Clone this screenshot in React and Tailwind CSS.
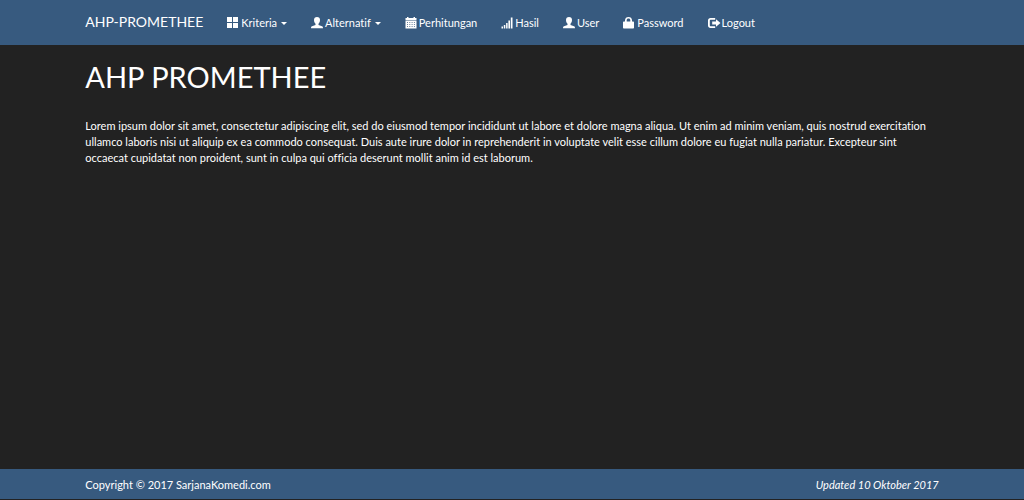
const ICONS = {
  kriteria: <path d="M0 0h5v5H0zM6 0h5v5H6zM0 6h5v5H0zM6 6h5v5H6z" />,
  orang: (
    <path d="M6 0C4 0 3 1.200 3 3c0 1.700.7 3 1.500 3.800v1.100L1 9.200C.2 9.600 0 10 0 11.300h12c0-1.300-.2-1.700-1-2.100L7.500 7.900V6.800C8.300 6 9 4.700 9 3 9 1.200 8 0 6 0z" />
  ),
  kalender: (
    <path
      fillRule="evenodd"
      d="M2 0h1.500v1h5V0H10v1h1.500v2H.5V1H2zM.5 3.500h11v8H.5zM2 5v.8h1V5zm2.300 0v.8h1V5zm2.300 0v.8h1V5zm2.300 0v.8h1V5zM2 7v.8h1V7zm2.300 0v.8h1V7zm2.300 0v.8h1V7zm2.300 0v.8h1V7zM2 9v.8h1V9zm2.300 0v.8h1V9zm2.300 0v.8h1V9zm2.300 0v.8h1V9z"
    />
  ),
  sinyal: <path d="M.5 9.500H2v2H.5zM2.800 8h1.500v3.500H2.800zM5.100 6h1.500v5.500H5.100zM7.400 3.500h1.600v8H7.400zM9.800 .5h1.700v11H9.800z" />,
  gembok: (
    <path
      fillRule="evenodd"
      d="M2 4.500V3.300C2 1.200 3.500 0 5.500 0S9 1.200 9 3.300v1.200h1.200c.5 0 .8.300.8.800v5.400c0 .5-.3.800-.8.800H.8c-.5 0-.8-.3-.8-.8V5.300c0-.5.300-.8.800-.8zm1.700 0h3.600V3.300c0-1-.7-1.700-1.800-1.700s-1.800.7-1.800 1.700z"
    />
  ),
  keluar: (
    <path d="M7.200 1v1.700H2.800c-.6 0-1 .4-1 1v4.600c0 .6.400 1 1 1h4.400V11H2.500C1 11 0 10 0 8.500v-5C0 2 1 1 2.500 1zM8 2.200 12.500 6 8 9.800V7.400H4.200V4.600H8z" />
  ),
};

const MENU = [
  { nama: "Kriteria", ikon: "kriteria", dropdown: true },
  { nama: "Alternatif", ikon: "orang", dropdown: true },
  { nama: "Perhitungan", ikon: "kalender" },
  { nama: "Hasil", ikon: "sinyal" },
  { nama: "User", ikon: "orang" },
  { nama: "Password", ikon: "gembok" },
  { nama: "Logout", ikon: "keluar" },
];

function Ikon({ nama }) {
  return (
    <svg viewBox="0 0 12 12" className="size-3 shrink-0 overflow-visible fill-current" aria-hidden="true">
      {ICONS[nama]}
    </svg>
  );
}

function MenuItem({ item }) {
  const isi = (
    <>
      <Ikon nama={item.ikon} />
      <span>{item.nama}</span>
    </>
  );

  if (item.dropdown) {
    return (
      <button type="button" aria-haspopup="true" className="flex items-center gap-0.5 hover:text-[#00bc8c]">
        {isi}
        <svg viewBox="0 0 6 3" className="mt-0.5 ml-0.5 h-[3px] w-1.5 fill-current" aria-hidden="true">
          <path d="M0 0h6L3 3z" />
        </svg>
      </button>
    );
  }

  return (
    <a href="#" className="flex items-center gap-0.5 hover:text-[#00bc8c]">
      {isi}
    </a>
  );
}

export default function App() {
  return (
    <div className="flex min-h-screen flex-col bg-[#222222] font-['Lato',sans-serif] text-[11px] leading-4 text-white [font-variant-ligatures:none]">
      <header className="bg-[#375a7f]">
        <nav className="mx-auto flex h-[45px] w-5/6 items-center gap-6">
          <a href="#" className="pb-0.5 text-[14px] leading-5">
            AHP-PROMETHEE
          </a>
          <ul className="flex items-center gap-6">
            {MENU.map((item) => (
              <li key={item.nama}>
                <MenuItem item={item} />
              </li>
            ))}
          </ul>
        </nav>
      </header>

      <main className="mx-auto w-5/6 grow pt-4">
        <h1 className="text-[29px] leading-8">AHP PROMETHEE</h1>
        <p className="mt-[25px]">
          Lorem ipsum dolor sit amet, consectetur adipiscing elit, sed do eiusmod tempor incididunt ut labore et dolore
          magna aliqua. Ut enim ad minim veniam, quis nostrud exercitation ullamco laboris nisi ut aliquip ex ea commodo
          consequat. Duis aute irure dolor in reprehenderit in voluptate velit esse cillum dolore eu fugiat nulla
          pariatur. Excepteur sint occaecat cupidatat non proident, sunt in culpa qui officia deserunt mollit anim id est
          laborum.
        </p>
      </main>

      <footer className="border-b border-[#222222] bg-[#375a7f]">
        <div className="mx-auto flex h-[30px] w-5/6 items-center justify-between pt-0.5">
          <p>Copyright © 2017 SarjanaKomedi.com</p>
          <p className="italic">Updated 10 Oktober 2017</p>
        </div>
      </footer>
    </div>
  );
}
